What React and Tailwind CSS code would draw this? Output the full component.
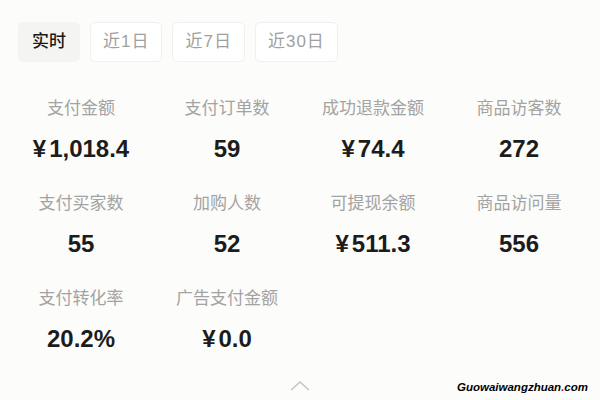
import React from "react";

const tabs = ["实时", "近1日", "近7日", "近30日"];

const stats = [
  { label: "支付金额", value: "1,018.4", yen: true },
  { label: "支付订单数", value: "59" },
  { label: "成功退款金额", value: "74.4", yen: true },
  { label: "商品访客数", value: "272" },
  { label: "支付买家数", value: "55" },
  { label: "加购人数", value: "52" },
  { label: "可提现余额", value: "511.3", yen: true },
  { label: "商品访问量", value: "556" },
  { label: "支付转化率", value: "20.2%" },
  { label: "广告支付金额", value: "0.0", yen: true },
];

const font = { fontFamily: "'Liberation Sans', 'Noto Sans CJK SC', sans-serif" };

export default function App() {
  return (
    <div
      className="w-[600px] h-[400px] bg-[#fcfcfa] relative overflow-hidden"
      style={font}
    >
      <div className="flex gap-[10px] pl-[18px] pt-[22px]">
        {tabs.map((t, i) => (
          <div
            key={t}
            className={`h-[40px] flex items-center justify-center rounded-[5px] text-[17px] ${
              i === 0
                ? "w-[62px] bg-[#f4f4f2] text-[#1a1a1a] font-medium"
                : "px-[12px] border border-[#f0f0ee] bg-white text-[#a0a0a0] tracking-[1px]"
            }`}
          >
            {t}
          </div>
        ))}
      </div>

      <div className="grid grid-cols-4 px-[8px] mt-[35px] gap-y-[27px]">
        {stats.map((s) => (
          <div key={s.label} className="flex flex-col items-center">
            <div className="text-[17px] leading-[24px] text-[#a3a3a3]">{s.label}</div>
            <div className="mt-[12px] text-[24px] leading-[32px] font-bold text-[#1c1c1c]">
              {s.yen && <span className="mr-[3px]">¥</span>}
              {s.value}
            </div>
          </div>
        ))}
      </div>

      <div className="absolute left-[289px] top-[380px]">
        <svg width="22" height="12" viewBox="0 0 22 12" fill="none">
          <path d="M2 10 L11 2 L20 10" stroke="#c4c4c4" strokeWidth="1.6" />
        </svg>
      </div>

      <div
        className="absolute right-[12px] top-[379px] text-[11.5px] font-bold italic text-black"
        style={{
          fontFamily: "'Liberation Sans', sans-serif",
          textShadow: "0 0 2px #fff, 0 0 2px #fff",
        }}
      >
        Guowaiwangzhuan<span className="text-[#d0021b]">.</span>com
      </div>
    </div>
  );
}
